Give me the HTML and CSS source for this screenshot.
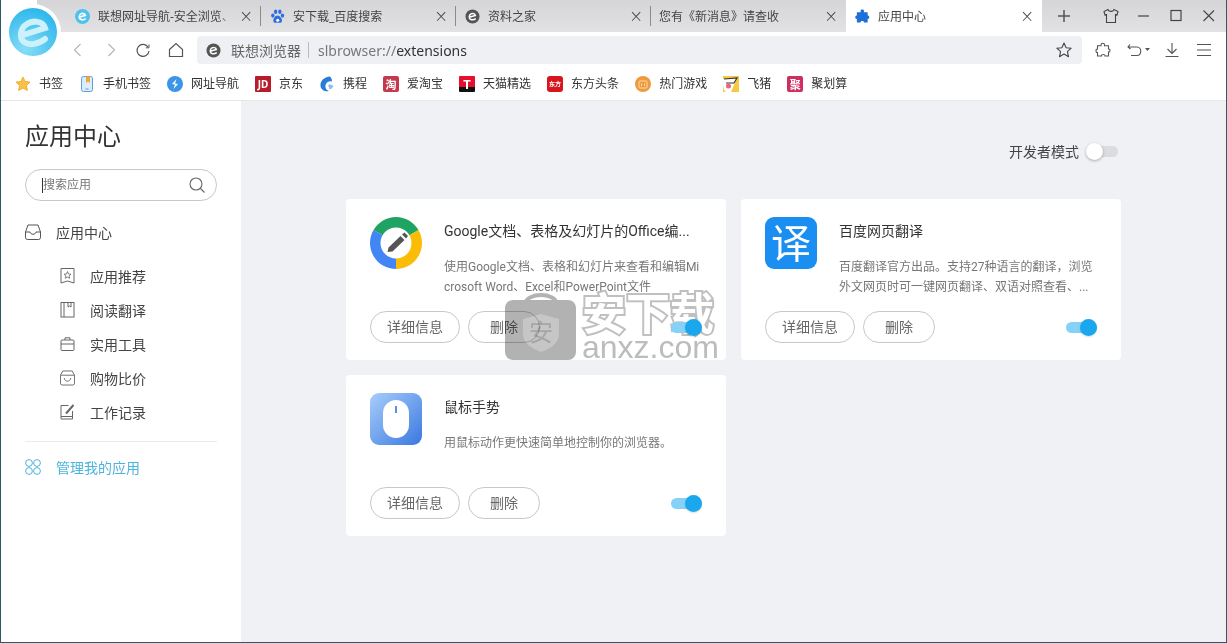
FILE: index.html

```html
<!DOCTYPE html>
<html lang="zh-CN">
<head>
  <meta charset="UTF-8">
  <title>应用中心</title>
  <link rel="stylesheet" href="styles.css">
</head>
<body>
  <div class="window">

    <!-- browser logo sits over the strip and toolbar -->
    <div class="logo">
      <svg width="48" height="48" viewBox="0 0 48 48">
        <defs>
          <radialGradient id="logoBall" cx="0.35" cy="0.85" r="0.95">
            <stop offset="0" stop-color="#86def6"/>
            <stop offset="1" stop-color="#25b3ec"/>
          </radialGradient>
        </defs>
        <circle cx="24" cy="24" r="24" fill="url(#logoBall)"/>
        <path d="M14 27 L36 20 C34 13 24 12 18 16 C11 20 10 30 15 34 C20 38 30 36 36 31" fill="none" stroke="#cdf1fb" stroke-width="6" stroke-linecap="round"/>
      </svg>
    </div>

    <div class="tabstrip">
      <div class="tab sep">
        <svg class="fav" viewBox="0 0 16 16"><circle cx="8" cy="8" r="8" fill="#4cc3ee"/><path d="M4.500 8.800 L11 6.800 C10.500 4.800 8 4.300 6.300 5.200 C4 6.500 4 10 6 11 C8 12 10 11.300 11.500 10.200" fill="none" stroke="#fff" stroke-width="1.800"/></svg>
        <span class="tab-title fade">联想网址导航-安全浏览、</span>
        <span class="tab-close">×</span>
      </div>
      <div class="tab sep">
        <svg class="fav" viewBox="0 0 16 16"><g fill="#2f6fdc"><ellipse cx="3" cy="7" rx="1.800" ry="2.300"/><ellipse cx="6" cy="3" rx="1.800" ry="2.400"/><ellipse cx="10.500" cy="3" rx="1.800" ry="2.400"/><ellipse cx="13.300" cy="7" rx="1.800" ry="2.300"/><path d="M8 7 C5.500 7 3.500 10 3.500 12.500 C3.500 15 6 15 8 14.500 C10 15 12.800 15 12.800 12.500 C12.800 10 10.500 7 8 7 Z"/></g><circle cx="8.200" cy="12" r="1.600" fill="#fff"/></svg>
        <span class="tab-title">安下载_百度搜索</span>
        <span class="tab-close">×</span>
      </div>
      <div class="tab sep">
        <svg class="fav" viewBox="0 0 16 16"><circle cx="8" cy="8" r="7.500" fill="#555"/><path d="M4.500 8.800 L11 6.800 C10.500 4.800 8 4.300 6.300 5.200 C4 6.500 4 10 6 11 C8 12 10 11.300 11.500 10.200" fill="none" stroke="#fff" stroke-width="1.600"/></svg>
        <span class="tab-title">资料之家</span>
        <span class="tab-close">×</span>
      </div>
      <div class="tab no-fav">
        <span class="tab-title">您有《新消息》请查收</span>
        <span class="tab-close">×</span>
      </div>
      <div class="tab active">
        <svg class="fav" viewBox="0 0 16 16"><path d="M6 1.500 C6 0.300 9.500 0.300 9.500 1.500 L9.500 3.500 L13.500 3.500 L13.500 7 C15.800 6.500 15.800 11 13.500 10.500 L13.500 14.500 L9.500 14.500 C10 12.200 5.500 12.200 6 14.500 L2 14.500 L2 10.500 C-0.300 11 -0.300 6.500 2 7 L2 3.500 L6 3.500 Z" fill="#1f6fd8"/></svg>
        <span class="tab-title">应用中心</span>
        <span class="tab-close">×</span>
      </div>
      <div class="new-tab">
        <svg width="14" height="14" viewBox="0 0 14 14"><path d="M7 1 V13 M1 7 H13" stroke="#555" stroke-width="1.500"/></svg>
      </div>
      <div class="caption">
        <svg width="16" height="16" viewBox="0 0 16 16"><path d="M5 1.500 L1 3.500 L2 7 L3.500 6.500 V14.500 H12.500 V6.500 L14 7 L15 3.500 L11 1.500 C10.500 4 5.500 4 5 1.500 Z" fill="none" stroke="#444" stroke-width="1.100"/></svg>
        <svg width="16" height="16" viewBox="0 0 16 16"><path d="M2 8 H13" stroke="#444" stroke-width="1.200"/></svg>
        <svg width="16" height="16" viewBox="0 0 16 16"><rect x="3" y="2.500" width="10" height="10" fill="none" stroke="#444" stroke-width="1.200"/></svg>
        <svg width="16" height="16" viewBox="0 0 16 16"><path d="M2.500 2.500 L13 13 M13 2.500 L2.500 13" stroke="#444" stroke-width="1.100"/></svg>
      </div>
    </div>

    <div class="toolbar">
      <div class="nav-btns">
        <svg width="16" height="16" viewBox="0 0 16 16"><path d="M10.500 2 L4.500 8 L10.500 14" fill="none" stroke="#b4b4b4" stroke-width="1.100"/></svg>
        <svg width="16" height="16" viewBox="0 0 16 16"><path d="M5.500 2 L11.500 8 L5.500 14" fill="none" stroke="#b4b4b4" stroke-width="1.100"/></svg>
        <svg width="16" height="16" viewBox="0 0 16 16"><path d="M13 5 A6 6 0 1 0 14 9" fill="none" stroke="#555" stroke-width="1.200"/><path d="M14 2.500 V5.800 H10.800" fill="none" stroke="#555" stroke-width="1"/></svg>
        <svg width="16" height="16" viewBox="0 0 16 16"><path d="M1.500 7.500 L8 1.500 L14.500 7.500 V14.500 H1.500 Z" fill="none" stroke="#555" stroke-width="1.200"/></svg>
      </div>
      <div class="address">
        <svg class="fav" viewBox="0 0 16 16"><circle cx="8" cy="8" r="7.500" fill="#555"/><path d="M4.500 8.800 L11 6.800 C10.500 4.800 8 4.300 6.300 5.200 C4 6.500 4 10 6 11 C8 12 10 11.300 11.500 10.200" fill="none" stroke="#fff" stroke-width="1.600"/></svg>
        <span class="addr-name">联想浏览器</span>
        <span class="addr-line"></span>
        <span class="addr-url"><span class="dim">slbrowser://</span>extensions</span>
        <svg class="addr-star" width="16" height="16" viewBox="0 0 16 16"><path d="M8 1 L10.100 5.700 L15.200 6.200 L11.400 9.600 L12.500 14.700 L8 12.100 L3.500 14.700 L4.600 9.600 L0.800 6.200 L5.900 5.700 Z" fill="none" stroke="#444" stroke-width="1.100" stroke-linejoin="round"/></svg>
      </div>
      <div class="tool-btns">
        <svg width="16" height="16" viewBox="0 0 16 16"><path d="M6 2.800 C6 0.800 9.500 0.800 9.500 2.800 V3.800 H13.500 V7 C15.500 6.500 15.500 10.500 13.500 10 V14 H10 C10.500 12 6 12 6.500 14 H2.500 V10.500 C0.500 11 0.500 6.500 2.500 7 V3.800 H6 Z" fill="none" stroke="#555" stroke-width="1.100"/></svg>
        <svg class="undo" width="24" height="16" viewBox="0 0 24 16"><path d="M3 2.500 L1 5 L3.500 7 M1.500 5 H10 C15 5 15 13.500 10 13.500 H4" fill="none" stroke="#555" stroke-width="1.100"/><path d="M18 6 H23 L20.500 9 Z" fill="#555"/></svg>
        <svg width="16" height="16" viewBox="0 0 16 16"><path d="M8 1 V11 M3.500 7 L8 11.500 L12.500 7 M1.500 14.500 H14.500" fill="none" stroke="#555" stroke-width="1.100"/></svg>
        <svg width="16" height="16" viewBox="0 0 16 16"><path d="M1 2.500 H15 M1 8 H15 M1 13.500 H15" stroke="#555" stroke-width="1.100"/></svg>
      </div>
    </div>

    <div class="bookmarks">
      <div class="bm">
        <svg viewBox="0 0 16 16"><path d="M8 1 L10.100 5.500 L15 6.100 L11.400 9.500 L12.400 14.500 L8 12 L3.600 14.500 L4.600 9.500 L1 6.100 L5.900 5.500 Z" fill="#f8c24a" stroke="#f4b02c" stroke-linejoin="round"/></svg>
        <span>书签</span>
      </div>
      <div class="bm">
        <svg viewBox="0 0 16 16"><rect x="2.500" y="0.500" width="11" height="15" rx="2" fill="#dcecfb" stroke="#5d9fdc"/><path d="M7 0.500 H11 V7 L9 5.500 L7 7 Z" fill="#f2a93b"/><path d="M6.500 13 H9.500" stroke="#5d9fdc"/></svg>
        <span>手机书签</span>
      </div>
      <div class="bm">
        <svg viewBox="0 0 16 16"><circle cx="8" cy="8" r="8" fill="#3c95e6"/><path d="M9.500 3 L5 8 L8 8.500 L6.500 13 L11 8 L8 7.500 Z" fill="#fff"/></svg>
        <span>网址导航</span>
      </div>
      <div class="bm">
        <span class="bm-box jd">JD</span>
        <span>京东</span>
      </div>
      <div class="bm">
        <svg viewBox="0 0 16 16"><path d="M11 0.500 C5 1 1 5 1.500 10 C2 14 6 16 10 15 C7 14 5.500 11 7 8 C8 6 10 5 13 5.500 C13 3.500 12.500 2 11 0.500 Z" fill="#2a7bd8"/><path d="M9 9 C10.500 8 13 8.500 14.500 10 C13.500 12.500 11.500 13.500 10 13 C10.500 12 9.500 10.500 9 9 Z" fill="#8fbfec"/></svg>
        <span>携程</span>
      </div>
      <div class="bm">
        <span class="bm-box taobao">淘</span>
        <span>爱淘宝</span>
      </div>
      <div class="bm">
        <span class="bm-box tmall">T</span>
        <span>天猫精选</span>
      </div>
      <div class="bm">
        <span class="bm-box toutiao">东方</span>
        <span>东方头条</span>
      </div>
      <div class="bm">
        <svg viewBox="0 0 16 16"><circle cx="8" cy="8" r="8" fill="#ef9a3d"/><rect x="4" y="5" width="8" height="7" rx="1" fill="none" stroke="#fbdcae"/><path d="M6.500 7.500 V10 M9.500 7.500 V10" stroke="#fbdcae"/></svg>
        <span>热门游戏</span>
      </div>
      <div class="bm">
        <svg viewBox="0 0 16 16"><rect width="16" height="16" fill="#f6c945"/><path d="M0 3 L14 2 L8 16 H3 C0 14 0 10 0 3 Z" fill="#fff"/><path d="M1 3 L14 2 L11 7 L3 7" fill="none" stroke="#333" stroke-width="1.200"/><circle cx="5.500" cy="10" r="2.500" fill="#e9676f"/></svg>
        <span>飞猪</span>
      </div>
      <div class="bm">
        <span class="bm-box juhuasuan">聚</span>
        <span>聚划算</span>
      </div>
    </div>

    <div class="page">
      <aside class="sidebar">
        <h1 class="side-title">应用中心</h1>
        <div class="search">
          <span class="caret"></span>
          <span class="search-text">搜索应用</span>
          <svg width="16" height="16" viewBox="0 0 16 16"><circle cx="7" cy="7" r="6" fill="none" stroke="#666" stroke-width="1.100"/><path d="M11.500 11.500 L15.500 15.500" stroke="#666" stroke-width="1.100"/></svg>
        </div>

        <div class="nav-head">
          <svg width="16" height="16" viewBox="0 0 16 16"><path d="M3 1 H13 L15.500 8 V13.500 Q15.500 15.500 13.500 15.500 H2.500 Q0.500 15.500 0.500 13.500 V8 Z" fill="none" stroke="#555"/><path d="M0.500 8 H5 C5.500 11 10.500 11 11 8 H15.500" fill="none" stroke="#555"/></svg>
          <span>应用中心</span>
        </div>

        <ul class="nav-list">
          <li>
            <svg width="14" height="16" viewBox="0 0 14 16"><path d="M0.500 0.500 H13.500 V15 L7 13 L0.500 15 Z" fill="none" stroke="#666"/><path d="M7 3.500 L8 6 L10.500 6.200 L8.600 7.900 L9.200 10.300 L7 9 L4.800 10.300 L5.400 7.900 L3.500 6.200 L6 6 Z" fill="none" stroke="#666" stroke-width="0.800"/></svg>
            应用推荐
          </li>
          <li>
            <svg width="14" height="16" viewBox="0 0 14 16"><rect x="0.500" y="0.500" width="13" height="14.500" fill="none" stroke="#666"/><path d="M3.500 0.500 V15 M7.500 0.500 V5 L9 4 L10.500 5 V0.500" fill="none" stroke="#666"/></svg>
            阅读翻译
          </li>
          <li>
            <svg width="14" height="14" viewBox="0 0 14 14"><rect x="0.500" y="3" width="13" height="10.500" rx="1" fill="none" stroke="#666"/><path d="M0.500 7 H13.500 M4.500 3 V0.800 H9.500 V3" fill="none" stroke="#666"/></svg>
            实用工具
          </li>
          <li>
            <svg width="16" height="16" viewBox="0 0 16 16"><path d="M3 0.500 H13 L15.500 5 V13.500 Q15.500 15.500 13.500 15.500 H2.500 Q0.500 15.500 0.500 13.500 V5 Z M0.500 5 H15.500" fill="none" stroke="#666"/><path d="M4.500 8 C5 12.500 11 12.500 11.500 8" fill="none" stroke="#666"/></svg>
            购物比价
          </li>
          <li>
            <svg width="14" height="16" viewBox="0 0 14 16"><path d="M8 1.500 H0.500 V15 H12 V7" fill="none" stroke="#666"/><path d="M5.500 9.500 L13 1" stroke="#666" stroke-width="2"/><path d="M0.500 12.500 H12" stroke="#666"/></svg>
            工作记录
          </li>
        </ul>

        <div class="side-line"></div>

        <div class="nav-manage">
          <svg width="16" height="16" viewBox="0 0 16 16"><g fill="none" stroke="#4db4dc"><circle cx="4" cy="4" r="3.400"/><circle cx="12" cy="4" r="3.400"/><circle cx="4" cy="12" r="3.400"/><circle cx="12" cy="12" r="3.400"/></g></svg>
          <span>管理我的应用</span>
        </div>
      </aside>

      <main class="content">
        <div class="dev-row">
          <span>开发者模式</span>
          <span class="switch"></span>
        </div>

        <div class="cards">
          <div class="card">
            <div class="card-top">
              <svg class="card-icon" viewBox="0 0 52 52">
                <path d="M26 26 L3.500 13 A26 26 0 0 1 48.500 13 Z" fill="#1ea362"/>
                <path d="M26 26 L48.500 13 A26 26 0 0 1 26 52 Z" fill="#fbbc05"/>
                <path d="M26 26 V52 A26 26 0 0 1 3.500 13 Z" fill="#4285f4"/>
                <circle cx="26" cy="26" r="15.500" fill="#fff"/>
                <path d="M32 17.500 L34.500 15.500 L38 19 L36 21.500 Z M30.500 19 L34.500 23 L22.500 34.500 L17.500 35 L18.500 30.500 Z" fill="#555"/>
              </svg>
              <div class="card-body">
                <div class="card-title">Google文档、表格及幻灯片的Office编...</div>
                <div class="card-desc">使用Google文档、表格和幻灯片来查看和编辑Microsoft Word、Excel和PowerPoint文件</div>
              </div>
            </div>
            <div class="card-foot">
              <button class="btn btn-info">详细信息</button>
              <button class="btn btn-del">删除</button>
              <span class="switch on"></span>
            </div>
          </div>

          <div class="card">
            <div class="card-top">
              <div class="card-icon icon-fanyi">译</div>
              <div class="card-body">
                <div class="card-title">百度网页翻译</div>
                <div class="card-desc">百度翻译官方出品。支持27种语言的翻译，浏览外文网页时可一键网页翻译、双语对照查看、...</div>
              </div>
            </div>
            <div class="card-foot">
              <button class="btn btn-info">详细信息</button>
              <button class="btn btn-del">删除</button>
              <span class="switch on"></span>
            </div>
          </div>

          <div class="card">
            <div class="card-top">
              <div class="card-icon icon-mouse">
                <span class="mouse"></span>
              </div>
              <div class="card-body">
                <div class="card-title">鼠标手势</div>
                <div class="card-desc">用鼠标动作更快速简单地控制你的浏览器。</div>
              </div>
            </div>
            <div class="card-foot">
              <button class="btn btn-info">详细信息</button>
              <button class="btn btn-del">删除</button>
              <span class="switch on"></span>
            </div>
          </div>
        </div>
      </main>
    </div>

    <!-- download site stamp over the first card -->
    <div class="stamp">
      <svg class="stamp-bag" width="72" height="68" viewBox="0 0 72 68">
        <path d="M20 12 C22 0 50 0 52 12" fill="none" stroke="#b2b2b2" stroke-width="4"/>
        <rect x="0" y="8" width="71" height="60" rx="8" fill="#b2b2b2"/>
        <path d="M36 22 L54 27 V42 C54 52 44 57 36 60 C28 57 18 52 18 42 V27 Z" fill="#c6c6c6"/>
        <text x="36" y="49" text-anchor="middle" font-size="24" fill="#a6a6a6">安</text>
      </svg>
      <div class="stamp-text">
        <div class="stamp-cn">安下载</div>
        <div class="stamp-en">anxz.com</div>
      </div>
    </div>
  </div>
</body>
</html>
```

FILE: styles.css

```css
* {
  box-sizing: border-box;
}
html, body {
  margin: 0;
  height: 100%;
}
body {
  font-family: "Noto Sans", "Noto Sans CJK SC", sans-serif;
  color: #333;
  overflow: hidden;
}
.window {
  position: relative;
  width: 1227px;
  height: 643px;
  display: flex;
  flex-direction: column;
  border-left: 1px solid #2f5a68;
  border-right: 1px solid #2f5a68;
  border-bottom: 1px solid #2f5a68;
  background: #fff;
}

/* logo */
.logo {
  position: absolute;
  left: 4px;
  top: 4px;
  width: 56px;
  height: 56px;
  border-radius: 50%;
  background: #fff;
  display: flex;
  align-items: center;
  justify-content: center;
}

/* tabs */
.tabstrip {
  height: 32px;
  padding-left: 65px;
  display: flex;
  align-items: stretch;
  background: linear-gradient(#fff, #fff) no-repeat 0 0 / 36px 32px, linear-gradient(#d5d5d7, #e2e2e4);
}
.tab {
  position: relative;
  width: 195px;
  display: flex;
  align-items: center;
  padding-left: 9px;
  font-size: 12px;
  color: #444;
}
.tab.sep::after {
  content: "";
  position: absolute;
  right: 0;
  top: 6px;
  height: 20px;
  width: 1px;
  background: #8a8a8a;
}
.tab.no-fav {
  padding-left: 8px;
}
.tab.active {
  width: 196px;
  background: #fff;
}
.fav {
  width: 15px;
  height: 15px;
  flex: none;
  margin-right: 8px;
}
.tab-title {
  width: 136px;
  white-space: nowrap;
  overflow: hidden;
}
.no-fav .tab-title {
  width: 160px;
}
.fade {
  -webkit-mask-image: linear-gradient(to right, #000 88%, transparent);
  mask-image: linear-gradient(to right, #000 88%, transparent);
}
.tab-close {
  position: absolute;
  right: 8px;
  top: 7px;
  width: 14px;
  height: 18px;
  line-height: 18px;
  text-align: center;
  font-size: 17px;
  color: #444;
  font-family: "DejaVu Sans", sans-serif;
  font-weight: 300;
}
.new-tab {
  width: 44px;
  display: flex;
  align-items: center;
  justify-content: center;
}
.caption {
  margin-left: auto;
  padding-right: 9px;
  display: flex;
  align-items: center;
  gap: 16.600px;
}

/* toolbar */
.toolbar {
  height: 36px;
  display: flex;
  align-items: center;
  background: #fff;
}
.nav-btns {
  width: 196px;
  padding-left: 69px;
  display: flex;
  gap: 16.500px;
}
.address {
  width: 885px;
  height: 28px;
  padding-left: 9px;
  padding-right: 10px;
  display: flex;
  align-items: center;
  background: #eff0f4;
  border-radius: 4px;
  font-size: 14px;
}
.address .fav {
  margin-right: 10px;
}
.addr-name {
  color: #666;
}
.addr-line {
  width: 1px;
  height: 16px;
  margin: 0 9px 0 7px;
  background: #bbb;
}
.addr-url {
  color: #333;
}
.dim {
  color: #777;
}
.addr-star {
  margin-left: auto;
}
.tool-btns {
  flex: 1;
  padding-left: 13px;
  display: flex;
  align-items: center;
  gap: 16px;
}
.undo {
  margin-right: -3px;
}

/* bookmarks */
.bookmarks {
  height: 32px;
  padding-left: 14px;
  display: flex;
  align-items: center;
  gap: 16px;
  background: #fff;
  font-size: 12px;
  color: #333;
}
.bm {
  display: flex;
  align-items: center;
  gap: 8px;
  white-space: nowrap;
}
.bm > span:last-child {
  margin-top: -3px;
}
.bm svg {
  width: 16px;
  height: 16px;
  margin-top: -1px;
}
.bm-box {
  width: 16px;
  height: 16px;
  margin-top: -1px;
  display: flex;
  align-items: center;
  justify-content: center;
  color: #fff;
  font-weight: 700;
  font-size: 11px;
  border-radius: 1px;
}
.jd {
  background: #b71c2b;
  font-size: 10px;
}
.taobao {
  background: #c33a4e;
  border-radius: 2px;
}
.tmall {
  background: linear-gradient(#e60f2d 70%, #111 70%);
  font-size: 13px;
}
.toutiao {
  background: #d8141c;
  font-size: 6px;
  border-radius: 3px;
}
.juhuasuan {
  background: #cf2f5f;
  border-radius: 2px;
}

/* page */
.page {
  flex: 1;
  display: flex;
  min-height: 0;
  border-top: 1px solid #e6e6e6;
}
.sidebar {
  width: 240px;
  padding: 0 24px;
  background: #fff;
}
.side-title {
  margin: 19px 0 17px;
  font-size: 24px;
  line-height: 32px;
  font-weight: 400;
  color: #333;
}
.search {
  height: 32px;
  width: 192px;
  padding: 0 11px 0 16px;
  display: flex;
  align-items: center;
  border: 1px solid #c8c8c8;
  border-radius: 16px;
  font-size: 12px;
  color: #777;
}
.caret {
  width: 1px;
  height: 15px;
  background: #333;
}
.search-text {
  flex: 1;
  margin-top: -2px;
}
.nav-head, .nav-manage {
  display: flex;
  align-items: center;
  gap: 15px;
  font-size: 14px;
  color: #444;
  height: 20px;
}
.nav-head {
  margin-top: 21px;
}
.nav-list {
  list-style: none;
  margin: 17px 0 0;
  padding: 0 0 0 35px;
}
.nav-list li {
  height: 34px;
  display: flex;
  align-items: center;
  font-size: 14px;
  color: #444;
}
.nav-list svg {
  margin-right: 15px;
  width: 15px;
}
.side-line {
  height: 1px;
  margin-top: 12px;
  width: 192px;
  background: #ebebeb;
}
.nav-manage {
  margin-top: 15px;
  color: #4db4dc;
}

/* main area */
.content {
  flex: 1;
  background: #eff1f5;
  padding: 0 0 0 105px;
}
.dev-row {
  width: 772px;
  height: 20px;
  margin-top: 40px;
  display: flex;
  justify-content: flex-end;
  align-items: center;
  gap: 8px;
  font-size: 14px;
  color: #444;
}
.switch {
  position: relative;
  display: inline-block;
  width: 31px;
  height: 11px;
  border-radius: 6px;
  background: #dcdcdf;
}
.switch::before {
  content: "";
  position: absolute;
  left: -1px;
  top: -3px;
  width: 17px;
  height: 17px;
  border-radius: 50%;
  background: #fff;
  box-shadow: 0 1px 3px rgba(0, 0, 0, 0.3);
}
.switch.on {
  z-index: 1;
  width: 31px;
  margin-left: auto;
  background: #85d2f6;
}
.switch.on::before {
  left: 14px;
  background: #1aa7ee;
  box-shadow: 0 1px 2px rgba(0, 0, 0, 0.15);
}
.cards {
  margin-top: 38px;
  display: grid;
  grid-template-columns: 380px 380px;
  grid-auto-rows: 161px;
  gap: 15px;
}
.card {
  background: #fff;
  border-radius: 4px;
  padding: 18px 24px 17px;
  display: flex;
  flex-direction: column;
}
.card-top {
  flex: 1;
  display: flex;
  min-height: 0;
}
.card-icon {
  width: 52px;
  height: 52px;
  flex: none;
}
.icon-fanyi {
  border-radius: 9px;
  background: #1b8ef2;
  color: #fff;
  font-size: 40px;
  line-height: 52px;
  text-align: center;
}
.icon-mouse {
  border-radius: 9px;
  background: linear-gradient(135deg, #a8cdfb, #3a78e0);
  display: flex;
  align-items: center;
  justify-content: center;
}
.mouse {
  position: relative;
  width: 26px;
  height: 38px;
  border-radius: 13px;
  background: #fff;
}
.mouse::before {
  content: "";
  position: absolute;
  left: 12px;
  top: 6px;
  width: 2px;
  height: 7px;
  background: #5b8fe6;
}
.card-body {
  width: 258px;
  margin-left: 22px;
  font-family: "Roboto", "Noto Sans CJK SC", sans-serif;
}
.card-title {
  margin-top: 4px;
  height: 20px;
  line-height: 20px;
  font-size: 14px;
  color: #333;
  white-space: nowrap;
}
.card-desc {
  margin-top: 16px;
  font-size: 12px;
  line-height: 20px;
  color: #777;
  word-break: break-all;
}
.card-foot {
  display: flex;
  align-items: center;
  gap: 8px;
}
.btn {
  height: 32px;
  padding: 0 0 2px;
  background: #fff;
  border: 1px solid #c8c8c8;
  border-radius: 16px;
  font-family: inherit;
  font-size: 14px;
  color: #666;
}
.btn-info {
  width: 90px;
}
.btn-del {
  width: 72px;
}

/* stamp */
.stamp {
  position: absolute;
  left: 504px;
  top: 292px;
  display: flex;
  gap: 5px;
}
.stamp-bag {
  mix-blend-mode: multiply;
}
.stamp-text {
  width: 140px;
}
.stamp-cn {
  height: 42px;
  font-size: 44px;
  line-height: 42px;
  font-weight: 700;
  color: #fff;
  -webkit-text-stroke: 4px #c0c0c0;
  paint-order: stroke fill;
  white-space: nowrap;
}
.stamp-en {
  font-family: "Liberation Sans", sans-serif;
  font-size: 32px;
  line-height: 26px;
  color: #bcbcbc;
  white-space: nowrap;
}
```
